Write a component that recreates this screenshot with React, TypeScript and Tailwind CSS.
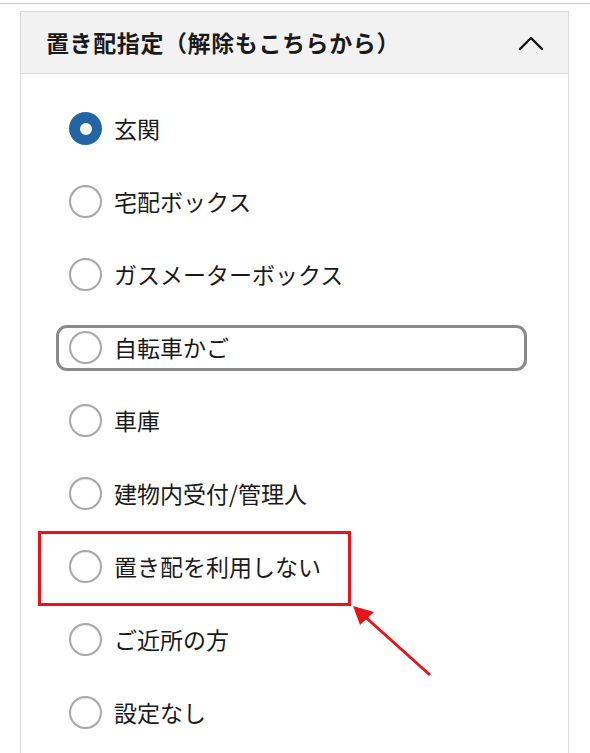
import { useState } from 'react';

const OPTIONS = [
  '玄関',
  '宅配ボックス',
  'ガスメーターボックス',
  '自転車かご',
  '車庫',
  '建物内受付/管理人',
  '置き配を利用しない',
  'ご近所の方',
  '設定なし',
];

function Radio({ checked }: { checked: boolean }) {
  if (checked) {
    return (
      <span className="w-[33px] h-[33px] rounded-full bg-[#2364a5] flex items-center justify-center flex-shrink-0">
        <span className="w-[12px] h-[12px] rounded-full bg-white" />
      </span>
    );
  }
  return (
    <span className="w-[33px] h-[33px] rounded-full border-2 border-[#a8a8a8] bg-white flex-shrink-0 shadow-[inset_0_1px_1px_rgba(0,0,0,0.08)]" />
  );
}

export default function App() {
  const [selected, setSelected] = useState(0);
  const focused = 3;

  return (
    <div
      className="relative w-full h-[753px] overflow-hidden bg-white text-[#1a1a1a]"
      style={{ fontFamily: '"Noto Sans CJK JP", "Noto Sans", sans-serif' }}
    >
      {/* top rule */}
      <div className="h-[4px] border-b border-[#c9c9c9]" />

      {/* card */}
      <div className="mt-[7px] ml-[20px] mr-[21px] border border-[#dcdcdc]">
        <div className="h-[62px] bg-[#f2f2f2] border-b border-[#dcdcdc] flex items-center justify-between pl-[25px] pr-[24px]">
          <h2 className="text-[23px] font-semibold tracking-[0.6px]">置き配指定（解除もこちらから）</h2>
          <svg width="26" height="16" viewBox="0 0 26 16" fill="none" stroke="#111" strokeWidth="2.4" strokeLinecap="round" strokeLinejoin="round">
            <polyline points="2,14 13,3 24,14" />
          </svg>
        </div>

        <div className="pt-[18px] pb-[40px] pl-[35px] pr-[41px]">
          {OPTIONS.map((label, i) => (
            <div key={label} className="h-[73px] flex items-center">
              <label
                onClick={() => setSelected(i)}
                className={`w-full h-[46px] flex items-center gap-[12px] pl-[10px] rounded-[11px] border-[3px] cursor-pointer ${
                  i === focused ? 'border-[#8a8a8a]' : 'border-transparent'
                }`}
              >
                <Radio checked={selected === i} />
                <span className="text-[23px] leading-none">{label}</span>
              </label>
            </div>
          ))}
        </div>
      </div>

      {/* annotation */}
      <div className="absolute left-[38px] top-[531px] w-[313px] h-[75px] border-[3px] border-[#e8141b]" />
      <svg className="absolute left-0 top-0" width="590" height="753" fill="none">
        <line x1="430" y1="675" x2="362" y2="614" stroke="#e8141b" strokeWidth="3" />
        <polygon points="353,606 374,612 360,625" fill="#e8141b" />
      </svg>
    </div>
  );
}
